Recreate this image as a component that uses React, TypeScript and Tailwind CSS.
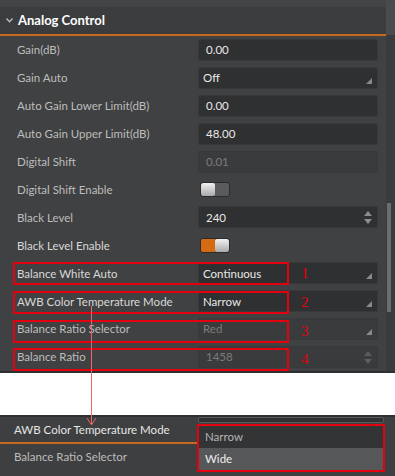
import React from "react";

type Kind = "input" | "select" | "spin" | "toggleOff" | "toggleOn";

interface Row {
	label: string;
	kind: Kind;
	value?: string;
	disabled?: boolean;
	bright?: boolean;
}

const ROWS: Row[] = [
	{ label: "Gain(dB)", kind: "input", value: "0.00" },
	{ label: "Gain Auto", kind: "select", value: "Off" },
	{ label: "Auto Gain Lower Limit(dB)", kind: "input", value: "0.00" },
	{ label: "Auto Gain Upper Limit(dB)", kind: "input", value: "48.00" },
	{ label: "Digital Shift", kind: "input", value: "0.01", disabled: true },
	{ label: "Digital Shift Enable", kind: "toggleOff" },
	{ label: "Black Level", kind: "spin", value: "240" },
	{ label: "Black Level Enable", kind: "toggleOn", bright: true },
	{ label: "Balance White Auto", kind: "select", value: "Continuous", bright: true },
	{ label: "AWB Color Temperature Mode", kind: "select", value: "Narrow", bright: true },
	{ label: "Balance Ratio Selector", kind: "select", value: "Red", disabled: true },
	{ label: "Balance Ratio", kind: "spin", value: "1458", disabled: true },
];

const SelectCorner = () => (
	<svg width="6" height="6" viewBox="0 0 6 6" className="absolute right-[5px] bottom-[4px]">
		<path d="M6 0 L6 6 L0 6 Z" fill="#8a8a8a" />
	</svg>
);

const SpinArrows = ({ dim }: { dim?: boolean }) => (
	<div className="absolute right-[5px] top-[4px] flex flex-col gap-[3px]">
		<svg width="8" height="5" viewBox="0 0 8 5">
			<path d="M4 0 L8 5 L0 5 Z" fill={dim ? "#5d5d5d" : "#8c8c8c"} />
		</svg>
		<svg width="8" height="5" viewBox="0 0 8 5">
			<path d="M0 0 L8 0 L4 5 Z" fill={dim ? "#5d5d5d" : "#8c8c8c"} />
		</svg>
	</div>
);

const Toggle = ({ on }: { on?: boolean }) => (
	<div className="ml-[2px] flex h-[15px] w-[30px] items-center rounded-[3px] border border-[#2b2b2b] bg-[#5a5b5d] overflow-hidden">
		{on ? (
			<>
				<div className="h-full w-[15px] bg-[#d46a12]" />
				<div className="h-full w-[14px] rounded-[2px] bg-gradient-to-b from-[#f2f2f2] to-[#a9a9a9]" />
			</>
		) : (
			<div className="h-full w-[14px] rounded-[2px] bg-gradient-to-b from-[#f2f2f2] to-[#a9a9a9]" />
		)}
	</div>
);

const Field = ({ row }: { row: Row }) => {
	if (row.kind === "toggleOff") return <Toggle />;
	if (row.kind === "toggleOn") return <Toggle on />;
	const text = row.disabled ? "text-[#7c7c7c]" : "text-[#e8e8e8]";
	const bg = row.disabled ? "bg-[#3a3b3c]" : "bg-[#2f3031]";
	return (
		<div className={`relative flex h-[22px] w-[180px] items-center rounded-[2px] border border-[#38393a] ${bg} ${row.kind === "select" ? "pl-[4px]" : "pl-[7px]"}`}>
			<span className={`text-[11.5px] ${text}`}>{row.value}</span>
			{row.kind === "select" && <SelectCorner />}
			{row.kind === "spin" && <SpinArrows dim={row.disabled} />}
		</div>
	);
};

export default function App() {
	return (
		<div
			className="relative flex h-[476px] w-[395px] flex-col overflow-hidden bg-white"
			style={{ fontFamily: 'Lato, "Liberation Sans", sans-serif' }}
		>
			{/* parameter tree */}
			<div className="flex h-[373px] w-full border-b-2 border-[#2e2f30]">
				<div className="flex w-[386px] flex-col bg-[#404142]">
					<div className="h-[7px] bg-[#434445]" />
					<div className="flex h-[29px] items-center border-b-2 border-[#c8671f] bg-[#3b3c3d] pl-[6px]">
						<svg width="7" height="5" viewBox="0 0 7 5" className="mr-[5px]">
							<path d="M0.5 0.5 L3.5 3.8 L6.5 0.5" stroke="#bdbdbd" strokeWidth="1.3" fill="none" />
						</svg>
						<span className="text-[13px] font-bold text-white">Analog Control</span>
					</div>
					{ROWS.map((row) => (
						<div key={row.label} className="flex h-[28px] items-center">
							<div
								className={`w-[198px] pl-[17px] text-[11.5px] ${
									row.bright ? "text-[#d8d8d8]" : "text-[#bdbdbd]"
								}`}
							>
								{row.label}
							</div>
							<Field row={row} />
						</div>
					))}
				</div>
				<div className="flex w-[9px] flex-col bg-[#3a3b3c]">
					<div className="h-[35px] bg-[#4a4b4c]" />
					<div className="h-[168px]" />
					<div className="ml-[1px] h-[109px] w-[4px] bg-[#6c6d6e]" />
				</div>
			</div>

			{/* spacer */}
			<div className="h-[42px] bg-white" />

			{/* expanded dropdown view */}
			<div className="relative flex flex-1 flex-col border-t-2 border-[#2f3030] bg-[#3e3f40]">
				<div className="flex h-[27px] items-center border-b-2 border-[#c8671f] w-[197px] pl-[14px]">
					<span className="text-[11.5px] text-[#e6e6e6] whitespace-nowrap">AWB Color Temperature Mode</span>
				</div>
				<div className="flex h-[26px] items-center pl-[14px]">
					<span className="text-[11.5px] text-[#bcbcbc]">Balance Ratio Selector</span>
				</div>
				<div className="absolute left-[198px] top-[0px] h-[6px] w-[186px] rounded-[2px] border border-[#5a5a5a] bg-[#2f3031]" />
				<div className="absolute left-[197px] top-[7px] flex w-[188px] flex-col border-2 border-[#e3000f] bg-[#333435]">
					<div className="flex h-[22px] items-center pl-[6px] text-[11.5px] text-[#b5b5b5]">Narrow</div>
					<div className="flex h-[22px] items-center bg-[#565758] pl-[6px] text-[11.5px] text-[#f0f0f0]">Wide</div>
				</div>
			</div>

			{/* annotations */}
			{[262, 291, 320, 348].map((top, i) => (
				<React.Fragment key={top}>
					<div
						className="absolute left-[13px] h-[23px] w-[276px] border-2 border-[#e3000f]"
						style={{ top }}
					/>
					<span
						className="absolute left-[301px] text-[15px] leading-none text-[#e3000f]"
						style={{ top: top + 4, fontFamily: '"Liberation Serif", serif' }}
					>
						{i + 1}
					</span>
				</React.Fragment>
			))}
			<svg className="absolute left-0 top-0" width="395" height="476" viewBox="0 0 395 476">
				<path d="M91.5 306 L91.5 424" stroke="#e8676a" strokeWidth="1" />
				<path d="M87 418 L91.5 425 L96 418" stroke="#e8676a" strokeWidth="1" fill="none" />
			</svg>
		</div>
	);
}
